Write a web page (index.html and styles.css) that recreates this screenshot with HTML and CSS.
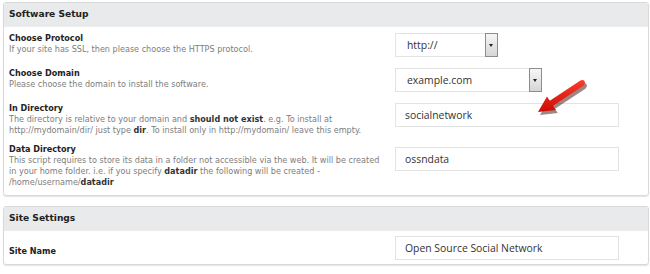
FILE: index.html
```html
<html>
<head>
    <meta charset="utf-8" />
    <link rel="stylesheet" href="styles.css">
</head>
<body>
    <!-- Software setup -->
    <div class="panel">
        <div class="panel-head">Software Setup</div>
        <div class="rows">
            <div class="label">
                <b>Choose Protocol</b>
                <span>If your site has SSL, then please choose the HTTPS protocol.</span>
            </div>
            <div class="field">
                <div class="select sel-protocol"><span>http://</span><i class="arrow-btn"></i></div>
            </div>

            <div class="label">
                <b>Choose Domain</b>
                <span>Please choose the domain to install the software.</span>
            </div>
            <div class="field">
                <div class="select sel-domain"><span>example.com</span><i class="arrow-btn"></i></div>
            </div>

            <div class="label">
                <b>In Directory</b>
                <span>The directory is relative to your domain and <strong>should not exist</strong>. e.g. To install at http://mydomain/dir/ just type <strong>dir</strong>. To install only in http://mydomain/ leave this empty.</span>
            </div>
            <div class="field">
                <div class="input">socialnetwork</div>
                <svg class="pointer" width="54" height="42" viewBox="0 0 54 42">
                    <defs>
                        <linearGradient id="red" x1="0" y1="0" x2="0" y2="1">
                            <stop offset="0" stop-color="#ff3a2c" />
                            <stop offset="1" stop-color="#c90d05" />
                        </linearGradient>
                    </defs>
                    <path d="M2 34 L11 18.5 L13.8 22.7 L44.4 2.5 Q48.5 0.5 49 5 L47.7 7.5 L17 27.7 L19.8 31.9 Z" fill="#3b0e0a" opacity="0.5" transform="translate(2,3)" />
                    <path d="M2 34 L11 18.5 L13.8 22.7 L44.4 2.5 Q48.5 0.5 49 5 L47.7 7.5 L17 27.7 L19.8 31.9 Z" fill="url(#red)" />
                </svg>
            </div>

            <div class="label label-up">
                <b>Data Directory</b>
                <span>This script requires to store its data in a folder not accessible via the web. It will be created in your home folder. i.e. if you specify <strong>datadir</strong> the following will be created - /home/username/<strong>datadir</strong></span>
            </div>
            <div class="field">
                <div class="input">ossndata</div>
            </div>
        </div>
    </div>

    <!-- Site settings -->
    <div class="panel">
        <div class="panel-head">Site Settings</div>
        <div class="rows rows-site">
            <div class="label label-mid">
                <b>Site Name</b>
            </div>
            <div class="field">
                <div class="input">Open Source Social Network</div>
            </div>
        </div>
    </div>
</body>
</html>
```

FILE: styles.css
```css
body {
    margin: 0;
    padding: 2px 1px 0 3px;
    background-color: #ffffff;
    font-family: "DejaVu Sans", Verdana, sans-serif;
}

.panel {
    border: 1px solid #d9d9d9;
    border-radius: 3px;
    box-shadow: 0 1px 1px #e4e4e4;
    margin-bottom: 10px;
}

.panel-head {
    background-color: #e9eaeb;
    height: 23px;
    line-height: 23px;
    padding-left: 5px;
    font-size: 9.1px;
    font-weight: bold;
    color: #222;
    border-bottom: 1px solid #ececec;
}

.rows {
    display: grid;
    grid-template-columns: 386px 1fr;
    row-gap: 11px;
    padding: 6px 0 7px 0;
}

.rows-site {
    padding: 5px 0 4px 0;
}

.label {
    padding: 0 1px 0 5px;
    font-size: 8.1px;
    line-height: 11px;
    color: #7d7d7d;
}

.label b {
    display: block;
    color: #222;
}

.label strong {
    color: #333;
}

.label-up {
    margin-top: -3px;
}

.label-mid {
    padding-top: 10px;
}

.field {
    position: relative;
    padding-left: 5px;
}

.select,
.input {
    box-sizing: border-box;
    height: 24px;
    line-height: 22px;
    border: 1px solid #e3e3e3;
    background-color: #fff;
    font-family: "Open Sans", "Segoe UI", sans-serif;
    font-size: 10.4px;
    color: #333;
}

.input {
    width: 224px;
    padding-left: 9px;
}

.select {
    display: flex;
    justify-content: space-between;
    padding-left: 11px;
}

.sel-protocol {
    width: 103px;
}

.sel-domain {
    width: 147px;
}

.arrow-btn {
    width: 11px;
    margin: -1px -1px -1px 0;
    border: 1px solid #8d8d8d;
    background: linear-gradient(#f6f6f6, #d6d6d6);
    position: relative;
}

.arrow-btn:after {
    content: "";
    position: absolute;
    left: 3px;
    top: 10px;
    border-left: 2.5px solid transparent;
    border-right: 2.5px solid transparent;
    border-top: 3px solid #222;
}

.pointer {
    position: absolute;
    left: 146px;
    top: -25px;
}
```
